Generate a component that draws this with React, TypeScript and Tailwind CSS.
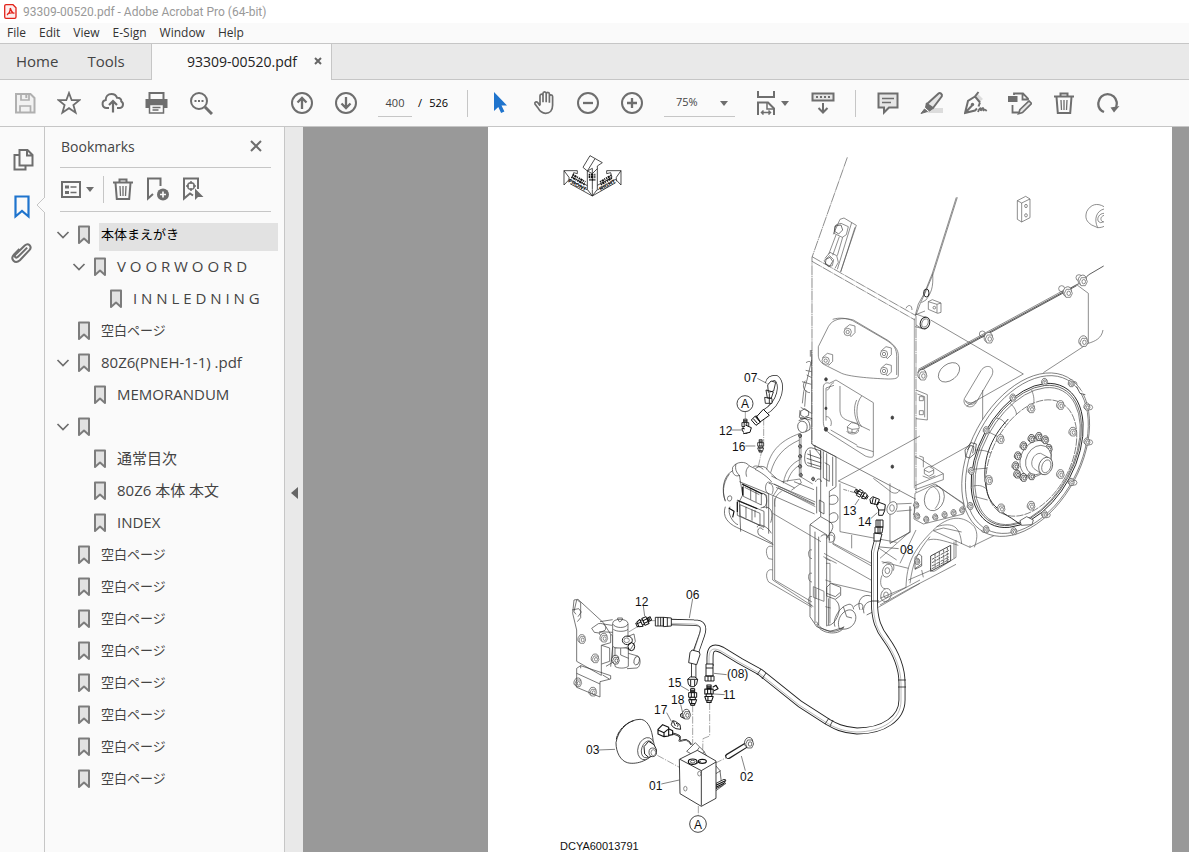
import React from "react";

type Pt = [number, number];

const ICON = "#6e6e6e";

function Icon({ children, className = "size-[24px]" }: { children: React.ReactNode; className?: string }) {
  return (
    <svg viewBox="0 0 24 24" className={className} fill="none" stroke={ICON} strokeWidth="2" aria-hidden="true">
      {children}
    </svg>
  );
}

function ToolButton({ label, children }: { label: string; children: React.ReactNode }) {
  return (
    <button type="button" aria-label={label} className="flex h-11 w-11 shrink-0 items-center justify-center">
      {children}
    </button>
  );
}

function Caret() {
  return (
    <svg viewBox="0 0 8 5" className="h-[5px] w-[8px]" fill={ICON} aria-hidden="true">
      <path d="M0 0h8L4 5z" />
    </svg>
  );
}

function TrashIcon() {
  return (
    <Icon>
      <path d="M2 5.500h20M8.500 5V2.500h7V5M4.500 6l1.300 16h12.400l1.300-16" />
      <path d="M9 9l.5 10M12 9v10M15 9l-.5 10" strokeWidth="1.300" />
    </Icon>
  );
}

function BookmarkGlyph() {
  return (
    <svg viewBox="0 0 14 20" className="h-[20px] w-[14px] shrink-0" fill="#e2e2e2" stroke="#7c7c7c" strokeWidth="2" strokeLinejoin="round" aria-hidden="true">
      <path d="M2 1.500h10V18l-5-4.500L2 18z" />
    </svg>
  );
}

function MenuBar() {
  return (
    <nav className="flex h-[20px] items-center gap-[13px] bg-[#fafafa] pl-[7px] text-[12px] text-[#333]">
      {["File", "Edit", "View", "E-Sign", "Window", "Help"].map((m) => (
        <button key={m} type="button">{m}</button>
      ))}
    </nav>
  );
}

function TabBar() {
  return (
    <div className="flex h-[37px] border-t border-[#c6c6c6] bg-[#e9e9e9] text-[14px] text-[#444]">
      <div className="flex w-[151px] items-center gap-[29px] border-b border-[#c6c6c6] pl-4 text-[15px]">
        <button type="button">Home</button>
        <button type="button">Tools</button>
      </div>
      <div className="flex w-[181px] items-center justify-end gap-[15px] border-x border-[#c6c6c6] bg-[#fafafa] pr-[8px] pb-[2px] text-[#222]">
        <span>93309-00520.pdf</span>
        <button type="button" aria-label="Close tab" className="flex w-[11px] justify-center">
          <svg viewBox="0 0 8 8" className="size-[8px]" stroke="#666" strokeWidth="2">
            <path d="M1 1l6 6M7 1L1 7" />
          </svg>
        </button>
      </div>
      <div className="flex-1 border-b border-[#c6c6c6]" />
    </div>
  );
}

function Toolbar() {
  return (
    <div className="flex h-[47px] items-center border-b border-[#c6c6c6] bg-[#fafafa] pl-[3px] text-[11px]">
      <ToolButton label="Save">
        <Icon>
          <g stroke="#b0b0b0">
            <path d="M3 3h14.500L21.500 7v14.500H3z" fill="#f2f2f2" />
            <path d="M8 3v6h8V3M7 21v-6h10.500v6" strokeWidth="1.700" />
            <path d="M13.300 4v3" />
          </g>
        </Icon>
      </ToolButton>
      <ToolButton label="Star">
        <Icon>
          <path d="M12 2l2.700 7.200h7.700l-6 4.800 2.200 7.700L12 17.200l-6.600 4.500 2.200-7.700-6-4.800h7.700z" strokeWidth="1.800" />
        </Icon>
      </ToolButton>
      <ToolButton label="Upload to cloud">
        <Icon>
          <path d="M8 17H5.500a4 4 0 0 1-.8-7.900C4.700 5.500 7 3 10.500 3c2.600 0 4.700 1.400 5.500 3.700 3-.2 4.500 1.700 4.300 3.700A3.600 3.600 0 0 1 19 17h-3" />
          <path d="M12 21.500V10.500M8 14l4-4 4 4" strokeWidth="2.200" />
        </Icon>
      </ToolButton>
      <ToolButton label="Print">
        <Icon>
          <path d="M4.500 9V2h14v7" />
          <path d="M.5 8h22v9h-4v-3h-14v3h-4z" fill={ICON} stroke="none" />
          <path d="M4.500 13.500h14V22h-14zM7.500 16.500h8M7.500 19h6" strokeWidth="1.500" fill="#fafafa" />
        </Icon>
      </ToolButton>
      <ToolButton label="Find">
        <Icon>
          <circle cx="10" cy="10" r="8" />
          <path d="M16 16l7 7" strokeWidth="3" />
          <path d="M5.500 10h2M9 10h2M12.500 10h2" />
        </Icon>
      </ToolButton>
      <div className="ml-[57px] flex">
        <ToolButton label="Previous page">
          <Icon><circle cx="12" cy="12" r="10" /><path d="M12 18V7M7.500 11.500L12 7l4.500 4.500" strokeWidth="2.300" /></Icon>
        </ToolButton>
        <ToolButton label="Next page">
          <Icon><circle cx="12" cy="12" r="10" /><path d="M12 6v11M7.500 12.500L12 17l4.500-4.500" strokeWidth="2.300" /></Icon>
        </ToolButton>
      </div>
      <input aria-label="Page number" defaultValue="400" className="ml-[10px] h-[28px] w-[34px] border-b border-[#c6c6c6] bg-transparent text-center text-[#444] outline-none" />
      <span className="ml-[6px] flex w-[30px] justify-between text-black"><span>/</span><span>526</span></span>
      <div className="ml-[19px] h-[27px] w-px bg-[#c6c6c6]" />
      <div className="ml-[10px] flex">
        <ToolButton label="Select">
          <Icon><path d="M6 1v19l4.300-4 2.800 6 3.300-1.500-2.900-5.900H19z" fill="#1f74cd" stroke="none" /></Icon>
        </ToolButton>
        <ToolButton label="Pan">
          <Icon>
            <path d="M6.500 15V5.500c0-2.200 3-2.200 3 0V12 3.200c0-2.200 3.200-2.200 3.200 0V12 3.700c0-2.200 3.200-2.200 3.200 0v8.800-6.300c0-2.200 3.200-2.200 3.200 0V15c0 5-2.800 8-7 8-4.200 0-6-2.200-7.800-5.600L1.500 13.800c-.8-2 1.500-3 2.700-1.500L6.500 15.500" transform="translate(1.500 -.7)" strokeWidth="1.700" />
          </Icon>
        </ToolButton>
        <ToolButton label="Zoom out">
          <Icon><circle cx="12" cy="12" r="10" /><path d="M7 12h10" strokeWidth="2.300" /></Icon>
        </ToolButton>
        <ToolButton label="Zoom in">
          <Icon><circle cx="12" cy="12" r="10" /><path d="M7 12h10M12 7v10" strokeWidth="2.300" /></Icon>
        </ToolButton>
      </div>
      <div className="relative ml-[10px] w-[71px]">
        <select aria-label="Zoom level" className="h-[28px] w-full appearance-none border-b border-[#c6c6c6] bg-transparent pl-[12px] text-[#444] outline-none">
          <option>75%</option>
        </select>
        <span className="pointer-events-none absolute top-[12px] right-[7px] flex"><Caret /></span>
      </div>
      <button type="button" aria-label="Fit width" className="ml-[19px] flex h-11 items-center gap-[3px]">
        <Icon>
          <path d="M4 0v6h16V0M4 24V11.500h10l6 6V24" />
          <path d="M13 12v6h6M7.500 21.500h9M9.500 19.500l-2 2 2 2M14.500 19.500l2 2-2 2" strokeWidth="1.500" />
        </Icon>
        <Caret />
      </button>
      <div className="ml-[12px]">
        <ToolButton label="Scrolling mode">
          <Icon>
            <path d="M1.500 2.500h21v7h-21z" fill="#e6e6e6" />
            <path d="M5 6h2M9 6h2M13 6h2M17 6h2M12 12v9M7.500 17l4.500 4.500 4.500-4.500" />
          </Icon>
        </ToolButton>
      </div>
      <div className="ml-[10px] h-[27px] w-px bg-[#c6c6c6]" />
      <div className="ml-[10px] flex">
        <ToolButton label="Comment">
          <Icon>
            <path d="M2.500 2.500h19v14H13l-5 5v-5H2.500z" fill="#e6e6e6" />
            <path d="M6 7.500h12M6 11.500h9" strokeWidth="1.500" />
          </Icon>
        </ToolButton>
        <ToolButton label="Highlight">
          <Icon>
            <path d="M10 17h13v5H7z" fill="#dcdcdc" stroke="none" />
            <path d="M7 13L18.500 2.500c1.500-1.200 4.200.5 3.300 2.800L13 17z" fill="#e6e6e6" />
            <path d="M6.500 12l6.500 5.500-3.500 2.500-4-3.500zM4.500 18l3 2.500L1 22.500z" fill={ICON} strokeWidth="1" />
          </Icon>
        </ToolButton>
        <ToolButton label="Sign">
          <Icon>
            <path d="M13 2l6 6-3 2.500L11 6z" fill="#dcdcdc" stroke="none" />
            <path d="M14.500 1L11 5.500l5 6M11 5.500L4 10 1 22l10-2.500 2-2M16 11.500l-1.500 4M1.500 21.500l6.500-7" strokeWidth="2" />
            <circle cx="8.500" cy="13.500" r="1.700" fill={ICON} stroke="none" />
            <path d="M14 21c2-5 3.500-5 2.800-1 1.500-4 3.200-4 2.400 0 1-2 2-1.500 3.500 0" strokeWidth="1.800" />
          </Icon>
        </ToolButton>
        <ToolButton label="Edit page">
          <Icon>
            <path d="M6 4V2.500h9l5 5V9M14.500 3v5.500H20M4.500 14v7.500h6" strokeWidth="1.800" />
            <path d="M0 5h9.500v6H0z" fill={ICON} stroke="none" />
            <path d="M12 18.500l9-8.500 2.500 2.500-9 9-4 1.200z" fill="#e6e6e6" strokeWidth="1.700" />
          </Icon>
        </ToolButton>
        <ToolButton label="Delete"><TrashIcon /></ToolButton>
        <ToolButton label="Rotate">
          <Icon>
            <path d="M8 21C3.500 19 1.800 15 2.500 11a9.200 9.200 0 0 1 18.200 0c.2 2-.2 4-.7 5" strokeWidth="2.300" />
            <path d="M14.500 16.500l9-1.500-5.500 6.500z" fill={ICON} stroke="none" />
          </Icon>
        </ToolButton>
      </div>
    </div>
  );
}

function Rail() {
  return (
    <aside className="flex w-[45px] shrink-0 flex-col border-r border-[#c6c6c6] bg-[#fafafa] pt-[11px]">
      <button type="button" aria-label="Page thumbnails" className="flex h-[46px] items-center pl-[12px]">
        <Icon>
          <path d="M7.500 6H2.500v14.500h11V17" />
          <path d="M7.500 1h8l5 5v10.500h-13zM15 1v5.500h5.500" />
        </Icon>
      </button>
      <button type="button" aria-label="Bookmarks" className="relative flex h-[46px] items-center pl-[10px]">
        <Icon><path d="M5.500 1.500h13v20L12 16l-6.500 5.500z" stroke="#1f74cd" strokeWidth="2.200" /></Icon>
        <svg viewBox="0 0 9 16" className="absolute top-[13px] -right-px h-[16px] w-[9px]">
          <path d="M9 0L1 8l8 8" fill="#fafafa" stroke="#c6c6c6" />
        </svg>
      </button>
      <button type="button" aria-label="Attachments" className="flex h-[46px] items-center pl-[10px]">
        <Icon>
          <path d="M18 6L8.500 15.500c-2 2-4.500-.5-2.500-2.500l9.500-9.200c3.800-3.200 8 1 4.800 4.800L10.500 19c-5 4.500-10.500-1-6-6L10 7.500" transform="translate(-.3 .8) scale(.97)" strokeWidth="2.100" />
        </Icon>
      </button>
    </aside>
  );
}

interface Node {
  label: string;
  depth: 0 | 1 | 2;
  open?: boolean;
  selected?: boolean;
  kana?: boolean;
}

const blank: Node = { label: "空白ページ", depth: 0, kana: true };

const nodes: Node[] = [
  { label: "本体まえがき", depth: 0, open: true, selected: true, kana: true },
  { label: "V O O R W O O R D", depth: 1, open: true },
  { label: "I N N L E D N I N G", depth: 2 },
  blank,
  { label: "80Z6(PNEH-1-1) .pdf", depth: 0, open: true },
  { label: "MEMORANDUM", depth: 1 },
  { label: "", depth: 0, open: true },
  { label: "通常目次", depth: 1 },
  { label: "80Z6 本体 本文", depth: 1 },
  { label: "INDEX", depth: 1 },
  blank, blank, blank, blank, blank, blank, blank, blank,
];

const indent = { 0: "pl-[11px]", 1: "pl-[27px]", 2: "pl-[43px]" };

function BookmarksPanel() {
  return (
    <section className="flex w-[240px] shrink-0 flex-col border-r border-[#c6c6c6] bg-[#fafafa] text-[15px] text-[#444]">
      <header className="mr-[13px] ml-[15px] flex h-[41px] items-center justify-between border-b border-[#c6c6c6] pr-[9px] pb-[2px] pl-px text-[14px]">
        <h2>Bookmarks</h2>
        <button type="button" aria-label="Close panel">
          <svg viewBox="0 0 12 12" className="size-[12px]" stroke={ICON} strokeWidth="2"><path d="M1 1l10 10M11 1L1 11" /></svg>
        </button>
      </header>
      <div className="mr-[13px] ml-[15px] flex h-[44px] items-center border-b border-[#c6c6c6]">
        <button type="button" aria-label="Options" className="flex items-center gap-[5px]">
          <svg viewBox="0 0 21 18" className="h-[18px] w-[21px]" fill="none" stroke={ICON} strokeWidth="2">
            <path d="M2 1h18v15H2z" />
            <path d="M5 6h4M5 11.500h4" strokeWidth="3" />
            <path d="M10.500 6h6M10.500 11.500h6" strokeWidth="1.600" />
          </svg>
          <Caret />
        </button>
        <div className="ml-[9px] h-[27px] w-px bg-[#c6c6c6]" />
        <div className="ml-[7px] flex gap-[11px] pb-px">
          <button type="button" aria-label="Delete bookmark"><TrashIcon /></button>
          <button type="button" aria-label="New bookmark">
            <Icon>
              <path d="M7 17l-5 4.500v-20h12.500V9" />
              <circle cx="17" cy="17.500" r="6" fill={ICON} stroke="none" />
              <path d="M14 17.500h6M17 14.500v6" stroke="#fafafa" strokeWidth="1.700" />
            </Icon>
          </button>
          <button type="button" aria-label="Find bookmark">
            <Icon>
              <path d="M17 12V1.500H3v20l6-5 3 2" />
              <circle cx="10" cy="9" r="3.300" strokeWidth="1.500" />
              <path d="M10 4v3M10 11v3M5 9h3M12 9h3" strokeWidth="1.500" />
              <path d="M14 11.500v11.500l3-3h5.500z" fill={ICON} stroke="none" />
            </Icon>
          </button>
        </div>
      </div>
      <ul className="pt-[7px]">
        {nodes.map((n, i) => (
          <li key={i} className={`flex h-8 items-center pr-[6px] ${indent[n.depth]}`}>
            <span className="flex w-[21px]">
              {n.open && (
                <button type="button" aria-label="Collapse">
                  <svg viewBox="0 0 14 8" className="h-[8px] w-[14px]" fill="none" stroke={ICON} strokeWidth="1.700"><path d="M1.500 1L7 6.500 12.500 1" /></svg>
                </button>
              )}
            </span>
            <BookmarkGlyph />
            <a href="#" className={`mt-[4px] ml-[8px] flex h-[28px] flex-1 items-center whitespace-nowrap pl-[2px] ${n.selected ? "bg-[#e2e2e2] text-black" : ""} ${n.kana ? "pb-[4px] text-[13px]" : "pb-[6px]"}`}>
              {n.label}
            </a>
          </li>
        ))}
      </ul>
    </section>
  );
}

/* Drawing primitives. Sheets are drafted at three units to the pixel. */

function Bolt({ at, r = 9, dark }: { at: Pt; r?: number; dark?: boolean }) {
  const [x, y] = at;
  return (
    <g transform={`translate(${x} ${y})`} fill="#fff" stroke={dark ? "#222" : undefined}>
      <ellipse cx={-r * 0.4} cy={-r * 0.3} rx={r} ry={r * 1.25} transform="rotate(20)" />
      <path d={`M${-r * 0.5} ${-r}L${r * 0.6} ${-r}L${r} 0L${r * 0.5} ${r}L${-r * 0.6} ${r}L${-r} 0Z`} />
      <ellipse cx={r * 0.1} rx={r * 0.45} ry={r * 0.55} />
    </g>
  );
}

function Bolts({ points, r, dark }: { points: Pt[]; r?: number; dark?: boolean }) {
  return <>{points.map((p, i) => <Bolt key={i} at={p} r={r} dark={dark} />)}</>;
}

function Fitting({ at, angle = 0, s = 1 }: { at: Pt; angle?: number; s?: number }) {
  return (
    <g transform={`translate(${at[0]} ${at[1]}) rotate(${angle}) scale(${s})`} fill="#fff" stroke="#111" strokeWidth="3">
      <path d="M-6-24h12v12h-12zM-6-19h12M-6-15h12" />
      <path d="M-12-12h24v14h-24zM-4-12v14M5-12v14" />
      <path d="M-8 2h16v7h-16zM-12 9h24l-4 12h-16zM-3 9v12M-6 21h12v5h-12z" />
    </g>
  );
}

function Hose({ d, w, clamps }: { d: string; w: number; clamps?: React.ReactNode }) {
  return (
    <g fill="none" strokeLinejoin="round">
      <path d={d} stroke="#222" strokeWidth={w} />
      <path d={d} stroke="#fff" strokeWidth={w - 1.8} />
      <path d={d} stroke="#777" strokeWidth=".5" transform="translate(-1 1)" />
      {clamps}
    </g>
  );
}

function Sheet({ x, y, children }: { x: number; y: number; children: React.ReactNode }) {
  return (
    <g transform={`translate(${x} ${y}) scale(.33333)`} fill="none" stroke="#555" strokeWidth="2" strokeLinejoin="round">
      {children}
    </g>
  );
}

function Orientation() {
  return (
    <Sheet x={540} y={140}>
      <g stroke="#222" strokeWidth="2.400">
        <path d="M150 47l37 21-15 10v70l-15 20-15-20V93l-13-11zM165 56l-23 37 15-8v62M157 148v20M142 93l15 8 15-15" />
        <path d="M142 150L112 133 88 118l-16 17V92h40v9l-11-3-4 14 45 25M72 92l15 20v14M157 168L90 131" />
        <path d="M172 150l55-32 16 17V92h-43v9l12-3 4 14-44 24M243 92l-14 20v12M157 168l70-40" />
      </g>
      <path d="M98 104l38 22M94 111l40 23M180 126l36-21M182 134l34-20M146 104h22M146 111h22M148 119h20" stroke="#111" strokeWidth="6" strokeDasharray="4 2 7 2 3 3" />
      <g fill="#111" stroke="none" fontSize="17" fontWeight="700" fontFamily="'Liberation Sans', Arial, sans-serif">
        <text transform="translate(84 126) rotate(29)">FRONT</text>
        <text transform="translate(182 153) rotate(-29)">RIGHT</text>
      </g>
    </Sheet>
  );
}

function Frame() {
  return (
    <Sheet x={800} y={140}>
      <path d="M142 52L36 352v560M36 350l312 177M36 364l309 176M348 527v530" strokeDasharray="30 2 4 2" />
      <path d="M343 535v510" stroke="#777" />
      <path d="M472 172L400 400l-25 60-14 30-13 35M469 172l-72 228-24 60-18 32-9 33M398 400c3 45-6 60-20 80l-14 8" />
      <path d="M120 238l12-4 37 22-47 139M120 238l-20 45M155 248l-43 140M165 262l-43 134M104 265l-2 15 25 12 12-8 6-24-22-10-14 4zM108 285l-22 58M118 290l-20 56M128 292l-16 55M75 355l15-18 20 10 5 20-10 18M72 362l13 18 12-3 4-18-12-12z" />
      <path d="M105 258l18-3 5 15-12 12-12-8zM78 358l12-6 8 12-8 14-14-6z" stroke="#333" />
      <path d="M55 620l30-60c12-22 40-30 75-20l105 62c20 15 30 28 30 45v58c0 10-8 12-30 12-60-2-120-8-140-17l-50-25c-16-8-20-20-20-30zM98 538c20-6 40-4 60 4l100 58c26 16 32 28 32 50v55" />
      <g fill="#fff">
        <path d="M134 566l15-12 16 4v20l-12 12zM244 632l14-12 16 4v20l-12 12zM244 684l14-12 16 4v20l-12 12zM68 652l14-12 16 4v20l-12 12z" />
        <circle cx="143" cy="576" r="11" /><circle cx="143" cy="576" r="5" />
        <circle cx="252" cy="642" r="11" /><circle cx="252" cy="642" r="5" />
        <circle cx="252" cy="693" r="11" /><circle cx="252" cy="693" r="5" />
        <circle cx="77" cy="662" r="11" /><circle cx="77" cy="662" r="5" />
      </g>
      <path d="M652 182l25-13 13 8v56l-25 13-13-8zM652 182l13 7 25-12M665 189v57" />
      <ellipse cx="678" cy="198" rx="4" ry="5" /><ellipse cx="678" cy="226" rx="4" ry="5" />
      <path d="M912 200c-20-12-40-8-52 15-6 20 0 30 15 40l18 8c10 0 15-2 19-4M893 263c-12-25-4-50 19-56M912 220c-18 0-26 25-10 28l10-3M912 226c-12 4-12 16-2 20" />
      <path d="M355 692l475-258c15-6 18-10 35-29l46-27M352 697l478-260" stroke="#333" strokeWidth="2.400" />
      <path d="M355 688L800 446M830 434l35 26v150M865 610c20-6 40-15 44-40M865 610L730 698M392 540l278 162L500 798M318 505c5-12 18-12 18 5M345 525l30-12M345 560l20 5" />
      <path d="M385 485l12-6 26 10v28l-10 3-28-12zM385 485l26 8v26M411 493l12-4" /><circle cx="403" cy="503" r="4" />
      <path d="M348 522l38 14M348 555l20 12" />
      <ellipse cx="375" cy="549" rx="14" ry="18" fill="#fff" stroke="#222" strokeWidth="3" transform="rotate(20 375 549)" />
      <ellipse cx="375" cy="549" rx="9" ry="13" transform="rotate(20 375 549)" />
      <ellipse cx="379" cy="459" rx="8" ry="12" stroke="#222" strokeWidth="3" />
      <circle cx="785" cy="446" r="9" /><circle cx="547" cy="582" r="9" /><circle cx="837" cy="413" r="9" />
      <Bolts points={[[805, 460], [568, 597], [369, 708], [852, 607], [850, 425]]} r={12} />
      <ellipse cx="447" cy="697" rx="36" ry="24" transform="rotate(-38 447 697)" />
      <path d="M493 776l50-84c14-22 44-14 33 14l-50 86c-14 18-40 6-33-16zM496 784c8 12 26 12 32 0M494 780c10 10 24 12 34 2" />
      <path d="M548 750v140" />
      <path d="M348 750l34 14v76l-34-4M352 762l22 8v62M358 770h12v12h-12zM358 812h12v12h-12z" />
    </Sheet>
  );
}

const rimBolts: Pt[] = [[400, 145], [320, 243], [275, 365], [272, 470], [320, 540], [403, 546], [495, 495], [575, 398], [622, 277], [622, 172], [575, 102], [495, 98]];
const plateBolts: Pt[] = [[455, 178], [543, 168], [580, 248], [543, 375], [455, 470], [365, 478], [328, 393], [363, 270]];
const hubBolts: Pt[] = [[508, 298], [497, 272], [478, 262], [456, 268], [432, 290], [415, 320], [408, 350], [413, 375], [432, 385], [456, 380]];

function Flywheel() {
  return (
    <Sheet x={880} y={350}>
      <path d="M105 430l60-28 85 60v30l-120 30-28-15zM105 320l15 6 70 45v18l-85 30M190 371l-85 36M130 352v-30l-12-4M168 405l90 60M150 352l140-78" />
      <ellipse cx="163" cy="445" rx="29" ry="38" transform="rotate(18 163 445)" />
      <path d="M160 410c20 10 28 40 5 66" />
      <Bolts points={[[113, 500], [140, 510], [167, 503], [195, 496], [222, 490], [248, 482], [110, 467]]} r={7} />
      <path d="M133 357l14-8 14 8v14l-14 8-14-8zM133 360l14 7 14-7M128 378l18 7 20-8" fill="#fff" />
      <path d="M78 712c2-70 20-110 80-170 50-50 95-45 125-12 12 20 8 40 0 62M90 700c8-60 20-92 60-140M170 530c50-15 70 0 75 52M160 542l30-8 55 12M160 542l110 50 78-38M270 592v-6M145 570c20-6 40 0 90 16M78 712L0 745M228 570v52l-62 40c-10 5-14 0-14-8M222 575v50M0 765l90-50 62-32 76-40M85 690l65-28M125 660l5 22" />
      <path d="M152 618l60-32v46l-60 32z" stroke="#222" strokeWidth="2.500" />
      <path d="M156 628l52-28M156 638l52-28M156 648l52-28M156 656l52-28M165 612v45M178 606v45M191 600v44M202 593v44" stroke="#444" strokeWidth="2.500" strokeDasharray="8 2 3 2" />
      <path d="M105 622l12-10 8 6v30l-20 10zM105 656l20-14" stroke="#333" />
      <Bolt at={[113, 636]} r={7} />
      <g fill="#fff">
        {rimBolts.map(([x, y], i) => <ellipse key={i} cx={x + (x > 437 ? 5 : -5)} cy={y} rx="11" ry="8" />)}
        <g transform="rotate(28.300 437 314)">
          <ellipse cx="437" cy="314" rx="165" ry="264" />
          <ellipse cx="440" cy="312" rx="158" ry="255" />
          <ellipse cx="442" cy="314" rx="144" ry="233" stroke="#222" strokeWidth="2.600" />
          <ellipse cx="442" cy="314" rx="139" ry="227" stroke="#333" />
          <ellipse cx="444" cy="315" rx="134" ry="222" />
        </g>
      </g>
      <path d="M455 120c8 20 8 35 5 45M390 160c15 12 20 25 20 40M350 205c14 0 20 8 28 18M320 243l50 25M285 300c20 0 40 2 52 12M278 358l50-4M280 408c18-4 30 0 40 10M285 440l38 10" />
      <ellipse cx="454" cy="324" rx="117" ry="188" fill="#fff" transform="rotate(28.300 454 324)" strokeDasharray="22 3" />
      <path d="M385 207c-55 58-82 130-66 208 6 44 36 66 76 90l26 18" stroke="#222" strokeWidth="2.800" />
      <Bolts points={rimBolts} r={8} />
      <Bolts points={plateBolts} r={10} />
      <path d="M255 300l18-22 16 4-4 28-16 14-12-4zM262 300l10-14 10 4-4 20" stroke="#222" />
      <path d="M420 512l20-12 20 10-4 14-32 2zM590 110l10 20 16 4" stroke="#222" fill="#fff" />
      <ellipse cx="467" cy="326" rx="44" ry="57" fill="#fff" transform="rotate(28 467 326)" />
      <Bolts points={hubBolts} r={9} dark />
      <ellipse cx="475" cy="330" rx="36" ry="46" fill="#fff" transform="rotate(28 475 330)" />
      <path d="M504 322l-22-12c-22-2-36 32-20 46l26 18z" fill="#fff" />
      <ellipse cx="497" cy="348" rx="20" ry="27" fill="#fff" stroke="#333" transform="rotate(20 497 348)" />
      <ellipse cx="499" cy="349" rx="13" ry="20" transform="rotate(20 499 349)" />
    </Sheet>
  );
}

function Transmission() {
  return (
    <Sheet x={700} y={350}>
      <path d="M335 0v282l313 166M331 0v20M335 30l-14 60-10 35-4 35M318 38c12-8 16-2 17 8M335 65l-18-4M320 75l15 8M306 95l28 8M316 92c-14 18 0 36 14 36M318 120l-4 50M302 172l33 18M300 180l-2 22 34 8" stroke="#444" />
      <path d="M296 212l28-10 12 4M296 240c-8-16 2-28 12-26 18 2 16 28 6 32s-14 0-18-6zM300 206c16-6 32 4 30 32l-14 8M302 184l12-8 12 8v12l-12 6-12-6z" stroke="#222" />
      <path d="M370 215V112c0-12 10-16 18-12l20-10 112 68v160c-2 6-14 4-24 0L392 252c-14-8-22-20-22-37zM378 212v-98l24-8M420 108v75c2 20 12 26 40 34l50 24M485 138c-18 20-20 70 0 92M470 150c-10 20-8 50 4 70M520 305l-50-16M392 240l80 46M380 120c12 0 6-18 22-22M378 200c12-2 20 16 14 28" />
      <path d="M442 230l12-12 20 2 4 14-12 14-22-2zM442 232l14 6 20-2M456 238v10M440 244c8 12 36 10 36-4" />
      <g fill="#444" stroke="#333"><ellipse cx="378" cy="88" rx="4" ry="5" /><ellipse cx="378" cy="175" rx="3" ry="4" /><ellipse cx="378" cy="238" rx="5" ry="6" /><ellipse cx="577" cy="203" rx="4" ry="5" /><ellipse cx="577" cy="350" rx="4" ry="5" /></g>
      <path d="M415 393l245-135M415 393l54 22M420 400v145M420 545l170 32M570 400v180l60-34v-78M570 580l62-34M630 470v75l-90 80M455 555v40M520 385l55 42c14 6 22 0 24-8" />
      <path d="M200 358c10-60 50-90 98-107M212 368c12-48 42-78 86-98M250 400c6-40 28-62 52-72M262 395c8-24 20-42 40-50M298 250v128l40 24M303 255v125M245 395l55-8 4 12-30 22" />
      <Bolts points={[[301, 258], [301, 290], [301, 320], [301, 350], [303, 376], [340, 388]]} r={4} dark />
      <path d="M314 325c0-24 10-36 26-30l22 8v55l-34-10c-10 0-14-12-14-23zM322 312l40 14M320 325l44 14M322 338l40 12M330 300l4 48" stroke="#222" />
      <path d="M338 285l70 35v90l-20 14v150M362 300v200M370 304v80l18 10v-48l-14-8M380 310v100M398 320v88M345 285c-4 18 14 20 18 38M362 500l-32 24v276l20 30 40 14 42-12M346 396c6-14 18-10 18 0M350 410v80M358 450l14 8v34l-14-8z" stroke="#333" />
      <path d="M388 440c14-10 26-2 26 8s-10 18-26 14M388 495c14-14 26-4 26 6s-8 18-26 16M388 550c12-8 18 6 16 16s-10 12-18 10M362 500l28 16c20 14 0 30-10 50M330 524l50 30v275M345 545v275M356 560v265M362 560c10-12 26-4 26 10" stroke="#333" />
      <path d="M380 560c20-14 28 4 18 22l115 65M372 610l148 84M370 620l40 20M400 580l118 62M395 700l120 28M378 640h12v180M376 625l16 8M376 690l18 6M376 770l16 4M340 710l32 14v30l-32-12zM348 715v32" />
      <path d="M380 712l12-12 30 12v24l-16 12-26-10zM380 730l26 10 14-12M386 745v80M406 750c28 20 0 80-24 76M418 836c-14-40 30-70 44-50 16 20-4 60-44 50zM405 830c-10-20 14-60 38-66 10-4 16 2 18 14M462 770c20-18 32-8 24 10M480 780c-12-30 10-50 32-42M492 790c-6-20 8-36 22-36M500 795l20-10M440 800l16 4M430 770l10 30" stroke="#333" />
      <path d="M350 815c10 30 60 40 82 14M350 822c10 30 66 36 80 12" stroke="#333" />
      <path d="M218 440v250l122 80M224 445v245l112 66M218 440l18-28M218 490l145 85M236 414l110 56M225 470c-4-20 4-38 20-46M218 590c-20-8-24 18-12 36l12 2M218 660c-18-6-24 18-12 36l130 76M336 600c-14-6-14 26 0 26M336 670c-14-6-14 26 0 26M336 740c-14-6-14 26 0 26" />
      <path d="M206 396c-10 0-14 28-2 34l140 62M206 396l140 60M206 400c14 0 16 20 10 32M222 402l122 60M228 412l116 52M214 378l70 36M282 395l60 24" stroke="#444" />
      <path d="M98 352c10-18 40-20 50-4l18 8c12-10 30-10 38 6l26 24M98 352c-4 20 10 30 20 24M108 342c-4 16 2 26 10 34M148 348c-10 8-12 20-8 32M160 350c8-4 18-2 30 8M165 358c14 6 40 24 50 38" stroke="#333" />
      <path d="M98 362c-30 16-34 60-22 92M88 372c-22 30-20 60-12 80M84 440c12-8 14 6 8 12-8 4-12-4-8-12zM76 470c-10 30 8 50 34 62l110 52M90 470c-10 20 10 50 24 54M118 375l10 60-10 20 4 90M118 395l88 36v120M130 405l54 26v34l-54-26zM134 412l44 22M152 415v34M168 422v34M112 450l80 34v48l-80-36zM120 464l60 26v36l-60-28zM138 470v34M156 478v34M184 430c20-2 22 40 4 42M182 474c30-10 40 10 30 44M190 430l10 6v40M165 480v22M172 532c0-14 30-6 42 18M190 540c-10-14-22-2-14 14l42 26" stroke="#333" />
      <path d="M126 402l62 30M114 452l58 24M128 410v26M112 456v30M86 474l16 10-4 18" stroke="#111" strokeWidth="3.500" />
      <g fill="#fff"><ellipse cx="576" cy="474" rx="14" ry="20" transform="rotate(25 576 474)" /><ellipse cx="576" cy="474" rx="7" ry="10" /><ellipse cx="562" cy="662" rx="14" ry="20" transform="rotate(20 562 662)" /><ellipse cx="562" cy="662" rx="7" ry="9" /><ellipse cx="558" cy="735" rx="15" ry="20" transform="rotate(20 558 735)" /><ellipse cx="558" cy="735" rx="7" ry="9" /></g>
      <path d="M590 462l45-2M590 484l45-4M640 465c6 6 6 20 0 30M545 635l80 20M530 590l60 40M548 640c20-10 40 0 32 22M546 676c-8 20-4 40 10 40M530 760l130-70M535 772l125-72M600 640l48-100" />
    </Sheet>
  );
}

function UpperHose() {
  return (
    <Sheet x={700} y={350}>
      <path d="M136 185v25M191 205v70l-16 75" stroke="#777" strokeDasharray="22 3 3 3" />
      <g stroke="#222" strokeWidth="2.500">
        <path d="M192 188c52-30 58-90 36-104-14-2-22 6-24 16" stroke="#222" strokeWidth="18" />
        <path d="M192 188c52-30 58-90 36-104-14-2-22 6-24 16" stroke="#fff" strokeWidth="13.500" />
        <path d="M203 105l10-12 14 4-6 26-16 4zM198 120l22 6-6 18h-12zM194 142l22 4v14h-20zM208 130v30" fill="#fff" stroke="#111" />
        <path d="M190 178l18 18-28 20-12-14zM166 198l16 18-14 10-14-16zM160 206l12 14M168 196l12 18" fill="#fff" stroke="#111" strokeWidth="3" />
        <path d="M172 85l28 15M95 240h32M136 288h30M465 465l12-18M512 506l20-18M530 590l66 6" stroke="#444" strokeWidth="2" />
        <path d="M430 418l40 12" stroke="#777" strokeDasharray="12 3 3 3" />
      </g>
      <Fitting at={[136, 228]} s={0.85} />
      <path d="M136 225l18 8-4 14-20 4" fill="#fff" stroke="#111" strokeWidth="3" />
      <Fitting at={[182, 287]} s={0.75} />
      <Fitting at={[483, 432]} angle={-60} s={0.85} />
      <path d="M510 448l8-8 20 8-4 16-22-4zM534 456l22 8-2 18 -6 14h-12v-16l-6-12zM536 480h18M520 442l-4 18M528 446l-4 18" fill="#fff" stroke="#111" strokeWidth="3" />
      <circle cx="135" cy="161" r="24" fill="#fff" stroke="#222" strokeWidth="2.500" />
    </Sheet>
  );
}

function LowerParts() {
  return (
    <Sheet x={550} y={580}>
      <path d="M72 60l12-2 76 70 22 35v25l-28 8v90l-74-42V150L68 100zM80 60l-8 35 6 8M82 60l10 8v45l-10 12M66 90l20-4 8 10-10 14M156 150c-12 2-10 18 2 18M155 196l24 8v40l-24 8M160 132l26 4M182 163l6 4v80l-20 12" stroke="#333" />
      <Bolts points={[[97, 180], [163, 176], [137, 238], [85, 310], [130, 338]]} r={10} />
      <path d="M80 265l12-8 90 30v10l-32 8v46L80 322zM80 280l70 32M92 257v8M158 285l20 12" stroke="#333" />
      <path d="M125 145l20-14c20-4 26 12 20 20l-18 8-14-2zM150 125l38-6M148 155l40 2M188 130c0-16 44-16 46 0v68c-4 10-42 10-46 0zM188 132c8 14 40 14 46 0M190 148c10 8 36 8 44 0M203 118v-4h14v6l-8 6z" fill="#fff" stroke="#333" />
      <path d="M195 204h40v55c-10 8-34 6-40 0zM235 220l28 8c10 4 10 32-2 36l-30 2M188 200l-6 60M212 205v20l24 10M232 170l20-8 4 22-14 24-12-2" fill="#fff" stroke="#333" />
      <ellipse cx="232" cy="181" rx="15" ry="13" stroke="#222" strokeWidth="3" /><ellipse cx="230" cy="181" rx="8" ry="7" />
      <ellipse cx="260" cy="242" rx="8" ry="13" stroke="#333" transform="rotate(15 260 242)" /><ellipse cx="244" cy="200" rx="10" ry="12" stroke="#111" strokeWidth="3" />
      <Bolts points={[[198, 242]]} r={10} dark />
      <path d="M236 156l30-18M305 122h12" stroke="#777" />
      <Fitting at={[282, 125]} angle={65} s={0.95} />

      <path d="M360 126l72 2c26 0 32 12 24 36l-22 62" stroke="#222" strokeWidth="19" />
      <path d="M358 126l74 2c26 0 32 12 24 36l-22 64" stroke="#fff" strokeWidth="14" />
      <path d="M362 130l66 2c22 0 28 10 20 32l-18 56" stroke="#777" strokeWidth="1.500" />
      <path d="M431 245v50" stroke="#222" strokeWidth="16" /><path d="M431 243v54" stroke="#fff" strokeWidth="11" />
      <path d="M316 112h24v26h-24zM324 112v26M332 112v26M340 112l24 2v24l-24 2zM352 113v26M420 218l6-8 22 6 2 8-10 30-24-6z" fill="#fff" stroke="#111" strokeWidth="2.600" />
      <path d="M413 298l8-7h14l8 7-3 14-7 8h-12l-6-8zM413 298h30M422 300v18M434 300v18" fill="#fff" stroke="#111" strokeWidth="2.800" />
      <path d="M428 375v160M479 368v100l-20 8-2 70M322 526l70 38M495 550l40-20M445 678v28" stroke="#777" strokeDasharray="22 4 4 4" />
      <Fitting at={[428, 350]} />
      <Fitting at={[477, 340]} s={1.050} />
      <path d="M488 322l10-6 6 10-12 6" stroke="#111" strokeWidth="3.500" />
      <g stroke="#444"><path d="M428 56l-10 58M280 78l4 30M393 318l24 14M530 284l-38-4M524 344l-32-2M392 373l6 26M350 398l14 26M145 510l50-2M334 612l54-12M574 528l12 44" /></g>

      <path d="M270 418c26 0 42 40 40 90 0 30-50 48-78 40-20-6-34-30-34-60 6-40 40-70 72-70z" fill="#fff" stroke="#222" strokeWidth="2.500" />
      <path d="M199 478c4-26 28-50 52-56" stroke="#222" strokeWidth="3" strokeDasharray="12 2" />
      <ellipse cx="288" cy="506" rx="24" ry="34" fill="#fff" stroke="#222" transform="rotate(18 288 506)" />
      <ellipse cx="292" cy="508" rx="17" ry="26" fill="#fff" stroke="#222" transform="rotate(18 292 508)" />
      <path d="M282 500l14-16 16 10 6 12c4 12 0 20-8 22l-14 4-12-10z" fill="#fff" stroke="#111" strokeWidth="2.800" />
      <ellipse cx="308" cy="517" rx="11" ry="13" fill="#fff" stroke="#111" /><ellipse cx="310" cy="518" rx="7" ry="9" />

      <path d="M410 514l26-26 26 26 10 18 14 12 24 28 4 34 14 4-30 22-36-20-20-80z" fill="#fff" stroke="#222" />
      <path d="M448 502l-18 26M470 528l-22 20M462 514l-8 14M486 544l-14 12M512 572l-16 10" stroke="#222" />
      <path d="M498 610l24-12 6 2-10 16-20 10z" fill="#fff" stroke="#111" strokeWidth="2.500" />
      <path d="M498 616l28-14M498 622l24-12" stroke="#111" strokeWidth="3.500" />
      <path d="M388 538l54-27 56 32v112l-44 24-64-38z" fill="#fff" stroke="#222" strokeWidth="2.600" />
      <path d="M390 538l64 34 44-26M454 572v105" stroke="#222" strokeWidth="2.600" />
      <ellipse cx="428" cy="545" rx="13" ry="8" stroke="#111" strokeWidth="3.500" /><ellipse cx="428" cy="545" rx="7" ry="4" stroke="#111" /><ellipse cx="457" cy="544" rx="12" ry="6" stroke="#111" strokeWidth="3.500" /><path d="M440 550l12-6" stroke="#111" strokeWidth="3" />
      <ellipse cx="448" cy="581" rx="5" ry="7" /><ellipse cx="406" cy="626" rx="5" ry="7" />
      <path d="M366 460c20 4 30 10 22 22 8 4 20-14 36 12" stroke="#111" strokeWidth="5" /><path d="M368 461c20 4 28 10 20 22 10 2 20-12 34 10" stroke="#fff" strokeWidth="1.500" />
      <path d="M324 448l14-14 18 8v26l-14 2-18-8zM324 450l18 8 12-10M342 458v10M356 446l12 6v12l-12 2" fill="#fff" stroke="#111" strokeWidth="3.500" />
      <path d="M364 434l4-12 8 2 14 10 2 14-14-2-10-6zM370 424l6 14M378 430c6 0 8 6 4 10" stroke="#111" strokeWidth="2.800" fill="#fff" />
      <path d="M392 402l12-4v18l-12-6z" stroke="#111" strokeWidth="3" fill="#fff" /><Bolt at={[411, 406]} r={11} dark />
      <path d="M532 528l56-34M536 530l54-34" stroke="#222" strokeWidth="14" strokeLinecap="round" /><path d="M534 529l54-33" stroke="#fff" strokeWidth="10" strokeLinecap="round" />
      <Bolt at={[599, 492]} r={12} dark />
      <circle cx="444" cy="732" r="25" fill="#fff" stroke="#222" strokeWidth="2.500" />
    </Sheet>
  );
}

const callouts: [string, number, number][] = [
  ["07", 744, 382], ["A", 741, 408], ["12", 719, 435], ["16", 732, 451], ["13", 843, 515], ["14", 858, 526],
  ["08", 900, 554], ["12", 635, 606], ["06", 686, 599], ["(08)", 727, 678], ["15", 668, 687], ["11", 723, 699],
  ["18", 671, 704], ["17", 654, 714], ["03", 586, 754], ["01", 649, 790], ["02", 740, 781], ["A", 694, 829],
];

function Diagram() {
  return (
    <svg viewBox="0 0 684 725" className="block w-full" role="img" aria-label="Parts diagram DCYA60013791">
      <g transform="translate(-488 -127)">
        <Orientation />
        <Frame />
        <Transmission />
        <Flywheel />
        <UpperHose />
        <Hose
          w={7}
          d="M878 538L874.500 552V600C874 620 879 630 886 639C896 653 902 668 902 683V700C902 718 884 731 857 731C842 730 835 726 828 722L800 704L760 672L740 661L722 650C712 645 710 650 710 658V666"
          clamps={<path d="M898 680h8M898 687h8M871 601h8M757 675l4-6M762 679l4-6M825 724l4-6M830 726l3-6" stroke="#222" strokeWidth=".8" />}
        />
        <g fill="#fff" stroke="#111" strokeWidth=".9">
          <path d="M876 520h7v7h-7zM875 527h8l-1 6h-7zM874 533l8 1-2 7h-6zM878 520v13M880 520v13M706 664h7v12h-7zM706 668h7M705 676h9v5h-9zM708 676v5M711 676v5" />
        </g>
        <LowerParts />
        <g fill="#111" fontSize="12" fontFamily="'Liberation Sans', Arial, sans-serif">
          {callouts.map(([t, x, y], i) => <text key={i} x={x} y={y}>{t}</text>)}
          <text x="560" y="850" fontSize="11">DCYA60013791</text>
        </g>
      </g>
    </svg>
  );
}

export default function App() {
  return (
    <div className="flex h-screen flex-col overflow-hidden bg-white font-['Open_Sans','Noto_Sans_CJK_JP',sans-serif]">
      <div className="flex h-[23px] shrink-0 items-center gap-[6px] pl-[4px] text-[#999]">
        <svg viewBox="0 0 13 15" className="h-[15px] w-[13px]" fill="none" stroke="#e2231a" aria-hidden="true">
          <path d="M2 .7h7l3 3V13a1.300 1.300 0 0 1-1.300 1.300H2A1.300 1.300 0 0 1 .7 13V2A1.300 1.300 0 0 1 2 .7z" fill="#fdeeee" strokeWidth="1.300" />
          <path d="M6.300 4c.7 3 1.700 4.700 4 5.500M6.300 4C6.300 7 5 9.500 3 11M3.500 9.800c2-1 4-1.300 7-.7" strokeWidth="1.300" />
        </svg>
        <h1 className="font-['Roboto',sans-serif] text-[12px]">93309-00520.pdf - Adobe Acrobat Pro (64-bit)</h1>
      </div>
      <div className="shrink-0">
        <MenuBar />
        <TabBar />
        <Toolbar />
      </div>
      <main className="flex min-h-0 flex-1">
        <Rail />
        <BookmarksPanel />
        <button type="button" aria-label="Collapse panel" className="flex w-[18px] shrink-0 items-center justify-center bg-[#e9e9e9] pt-[6px]">
          <svg viewBox="0 0 7 12" className="h-[12px] w-[7px]" fill="#666"><path d="M7 0v12L0 6z" /></svg>
        </button>
        <div className="min-w-0 flex-1 overflow-hidden bg-[#999] pr-[17px] pl-[185px]">
          <div className="min-h-full bg-white">
            <Diagram />
          </div>
        </div>
      </main>
    </div>
  );
}
